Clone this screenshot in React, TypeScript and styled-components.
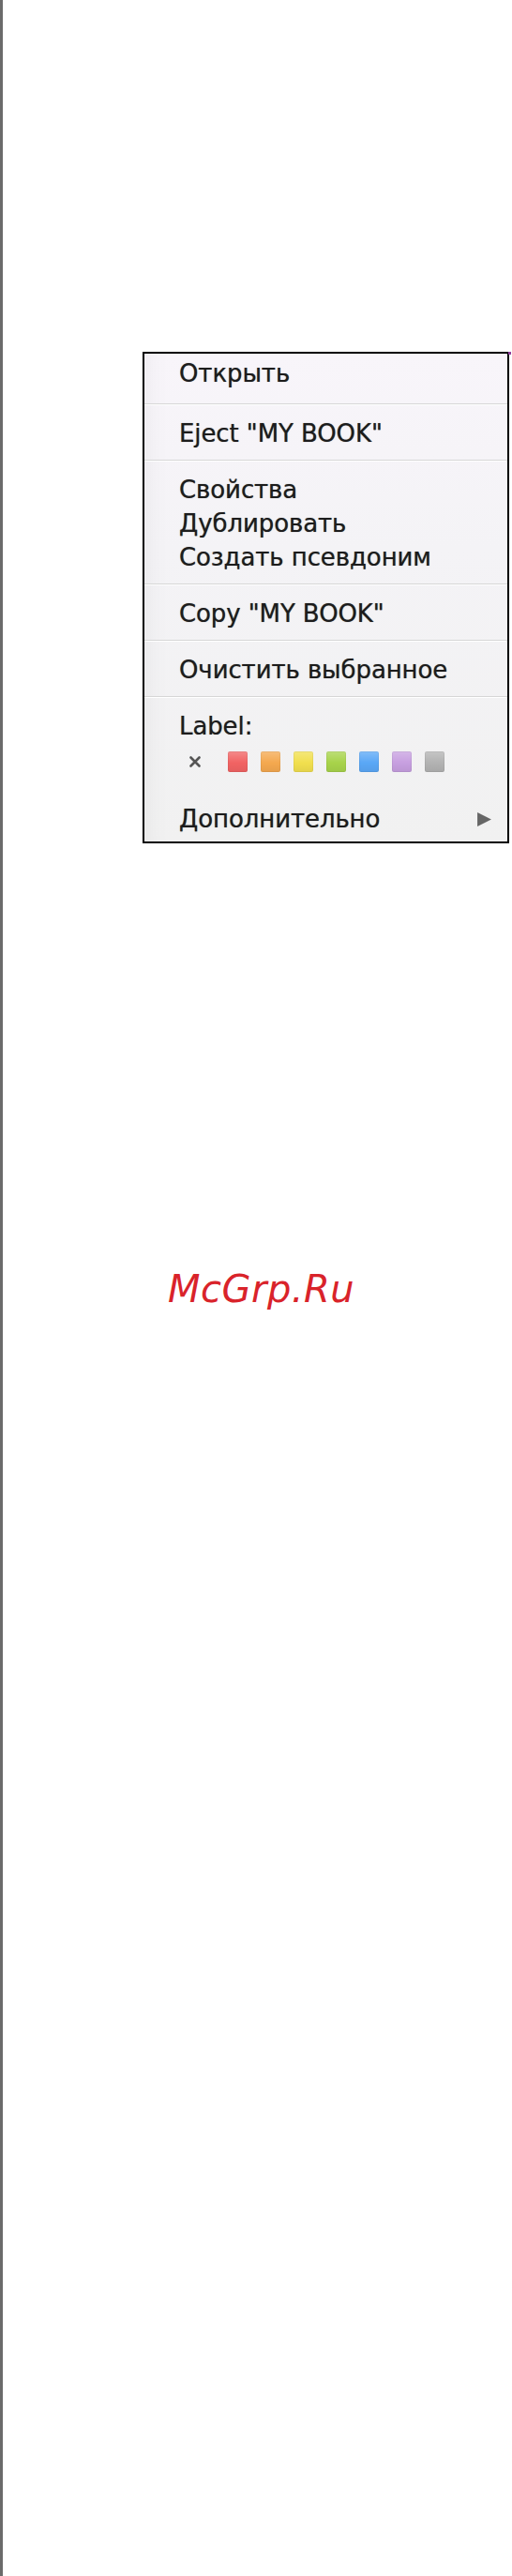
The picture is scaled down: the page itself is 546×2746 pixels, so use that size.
import React from "react";
import styled, { createGlobalStyle } from "styled-components";

const GlobalStyle = createGlobalStyle`
  html, body {
    margin: 0;
    padding: 0;
    background: #ffffff;
  }
  body {
    font-family: "DejaVu Sans", "Liberation Sans", sans-serif;
  }
`;

const Page = styled.div`
  display: flex;
  min-height: 2746px;
  background: #ffffff;
`;

const SideRule = styled.div`
  width: 3px;
  flex: 0 0 3px;
  background: #6b6b6b;
`;

const Content = styled.div`
  flex: 1;
  display: flex;
  flex-direction: column;
  align-items: flex-start;
  padding-top: 375px;
`;

const Menu = styled.div`
  position: relative;
  margin-left: 149px;
  width: 391px;
  box-sizing: border-box;
  border: 2px solid #000000;
  background: linear-gradient(180deg, #f8f5fa 0%, #f4f3f6 40%, #f1f1f1 100%);
  box-shadow: inset 30px 0 30px -30px rgba(0, 0, 0, 0.06);
`;

const CornerMark = styled.span`
  position: absolute;
  left: calc(100% + 1px);
  top: -2px;
  width: 3px;
  height: 3px;
  background: #8e3d9b;
`;

const Section = styled.div<{ $top?: number; $bottom?: number }>`
  padding: ${(p) => p.$top ?? 13}px 0 ${(p) => p.$bottom ?? 10}px;
`;

const Separator = styled.div`
  height: 1px;
  background: #d6d6d6;
  box-shadow: 0 1px 0 #ffffff;
`;

const Item = styled.div`
  display: flex;
  align-items: center;
  justify-content: space-between;
  height: 36px;
  line-height: 36px;
  padding: 0 16px 0 37px;
  font-family: "DejaVu Sans", "Liberation Sans", sans-serif;
  font-size: 26px;
  color: #1c1c1c;
  white-space: nowrap;
  letter-spacing: -0.1px;
  text-shadow: 0 0 0.8px rgba(0, 0, 0, 0.6);
`;

const SwatchRow = styled.div`
  display: flex;
  align-items: center;
  gap: 14px;
  margin-top: 9px;
  padding-left: 48px;
  height: 22px;
`;

const ClearCell = styled.span`
  display: flex;
  align-items: center;
  width: 27px;
  height: 22px;
`;

const Swatch = styled.span<{ $color: string }>`
  display: block;
  width: 21px;
  height: 22px;
  border-radius: 2px;
  background: ${(p) => p.$color};
  background-image: linear-gradient(
    180deg,
    rgba(255, 255, 255, 0.25) 0%,
    rgba(255, 255, 255, 0) 55%,
    rgba(0, 0, 0, 0.06) 100%
  );
  box-shadow: inset 0 0 0 1px rgba(0, 0, 0, 0.05);
`;

const SubmenuGap = styled.div`
  height: 32px;
`;

const Watermark = styled.div`
  margin-top: 455px;
  margin-left: 176px;
  font-family: "DejaVu Sans", "Liberation Sans", sans-serif;
  font-style: oblique;
  font-size: 40px;
  line-height: 40px;
  letter-spacing: 0.5px;
  color: #d9232a;
`;

const swatchColors = [
  "#f16363",
  "#f4a84f",
  "#f1df4e",
  "#a7d34a",
  "#5aa7f6",
  "#c79fe0",
  "#b2b2b2",
];

const ClearIcon = () => (
  <svg width="12" height="12" viewBox="0 0 12 12">
    <path
      d="M1.5 1.5 L10.5 10.5 M10.5 1.5 L1.5 10.5"
      stroke="#555555"
      strokeWidth="2.6"
      strokeLinecap="round"
    />
  </svg>
);

const SubmenuArrow = () => (
  <svg width="17" height="17" viewBox="0 0 16 16">
    <polygon points="1,1 15,8 1,15" fill="#666666" />
  </svg>
);

export default function App() {
  return (
    <>
      <GlobalStyle />
      <Page>
        <SideRule />
        <Content>
          <Menu>
            <CornerMark />
            <Section $top={3} $bottom={14}>
              <Item>Открыть</Item>
            </Section>
            <Separator />
            <Section>
              <Item>Eject "MY BOOK"</Item>
            </Section>
            <Separator />
            <Section>
              <Item>Свойства</Item>
              <Item>Дублировать</Item>
              <Item>Создать псевдоним</Item>
            </Section>
            <Separator />
            <Section>
              <Item>Copy "MY BOOK"</Item>
            </Section>
            <Separator />
            <Section>
              <Item>Очистить выбранное</Item>
            </Section>
            <Separator />
            <Section $bottom={6}>
              <Item>Label:</Item>
              <SwatchRow>
                <ClearCell>
                  <ClearIcon />
                </ClearCell>
                {swatchColors.map((c) => (
                  <Swatch key={c} $color={c} />
                ))}
              </SwatchRow>
              <SubmenuGap />
              <Item>
                <span>Дополнительно</span>
                <SubmenuArrow />
              </Item>
            </Section>
          </Menu>
          <Watermark>McGrp.Ru</Watermark>
        </Content>
      </Page>
    </>
  );
}
